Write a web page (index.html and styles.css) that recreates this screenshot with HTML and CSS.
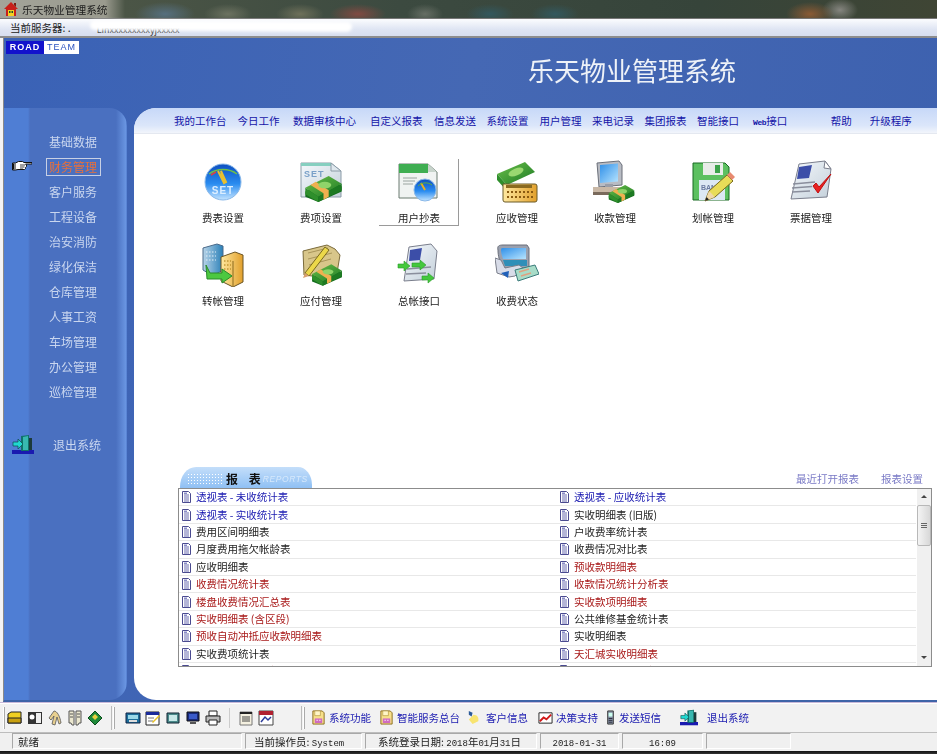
FILE: index.html
```html
<!DOCTYPE html>
<html lang="zh-CN">
<head>
<meta charset="utf-8">
<title>乐天物业管理系统</title>
<link rel="stylesheet" href="styles.css">
</head>
<body>
<svg class="defs" width="0" height="0" aria-hidden="true">
  <defs>
    <linearGradient id="gBall" x1="0" y1="0" x2="0" y2="1"><stop offset="0" stop-color="#0d4fc0"/><stop offset=".55" stop-color="#2a8cf0"/><stop offset="1" stop-color="#c4e4ff"/></linearGradient>
    <linearGradient id="gMoney" x1="0" y1="0" x2="1" y2="1"><stop offset="0" stop-color="#6cc04a"/><stop offset="1" stop-color="#1c7a24"/></linearGradient>
    <linearGradient id="gPaper" x1="0" y1="0" x2="1" y2="1"><stop offset="0" stop-color="#f4f8fc"/><stop offset="1" stop-color="#c4d0da"/></linearGradient>
    <linearGradient id="gGold" x1="0" y1="0" x2="1" y2="0"><stop offset="0" stop-color="#ffe9a0"/><stop offset="1" stop-color="#e2a02c"/></linearGradient>
    <linearGradient id="gScreen" x1="0" y1="0" x2="1" y2="1"><stop offset="0" stop-color="#2f8fe8"/><stop offset="1" stop-color="#b6e4ff"/></linearGradient>
    <linearGradient id="gTower" x1="0" y1="0" x2="1" y2="0"><stop offset="0" stop-color="#b8d4e8"/><stop offset="1" stop-color="#2a80b8"/></linearGradient>
    <symbol id="money" viewBox="0 0 30 22">
      <path d="M1 13 19 3l10 6v4L11 21 1 17z" fill="#156e1e"/>
      <path d="M1 10 19 1l10 6-18 10z" fill="url(#gMoney)"/>
      <path d="M1 10l10 7v4L1 15z" fill="#2f8f2c"/>
      <path d="M11 17 29 7v5L11 21z" fill="#1d7a22"/>
      <path d="M9 5.500l10 6.500v5l-4 2.200v-5L5 8z" fill="#f0b050"/>
      <ellipse cx="16" cy="8" rx="5" ry="2.500" fill="#8fd46a"/>
    </symbol>
    <symbol id="doc" viewBox="0 0 11 12">
      <path d="M1.500.500h6l2 2v9h-8z" fill="#fff" stroke="#4a4a90"/>
      <path d="M3 4h5M3 6h5M3 8h5M3 10h5" stroke="#6a6cb0" stroke-width="1"/>
      <path d="M3 1.500h3v1.500H3z" fill="#8a8cc8"/>
    </symbol>
    <symbol id="bolt" viewBox="0 0 16 16">
      <path d="M2 1h10l2 2v12H2z" fill="#f7e08a" stroke="#8a6a1a"/>
      <path d="M4 1h6v5H4z" fill="#fff6c8" stroke="#a88a2a" stroke-width=".6"/>
      <path d="M4 9h8v5H4z" fill="#d06cc0"/>
      <path d="M6 11h1M9 11h1" stroke="#fff" stroke-width="1.400"/>
    </symbol>
    <symbol id="exit" viewBox="0 0 22 19">
      <path d="M0 15h22v4H0z" fill="#1a1ab0"/>
      <path d="M9 1l8-1v16H9z" fill="#10726a"/>
      <path d="M11 2l5-1v14h-5z" fill="#38b8b0"/>
      <path d="M17 3h3v12h-3z" fill="#1c3a3a"/>
      <path d="M1 7h5V4l5 5-5 5v-3H1z" fill="#20d8d0" stroke="#0b4a4a" stroke-width=".7"/>
    </symbol>
  </defs>
</svg>

<div class="app">
  <div class="titlebar">
    <svg class="title-ico" viewBox="0 0 14 14"><path d="M7 0 0 7h2v7h10V7h2z" fill="#c8201a"/><path d="M4 8h6v6H4z" fill="#f4d020"/><path d="M5 9h1.500v2H5zM7.500 9H9v2H7.500z" fill="#20502a"/><path d="M10 1h2v4l-2-2z" fill="#7a1a10"/></svg>
    <span>乐天物业管理系统</span>
  </div>
  <div class="serverbar">
    <span class="server-label">当前服务器: .</span>
    <span class="server-value">Linxxxxxxxxxyjxxxxx</span>
    <span class="server-mask"></span>
  </div>

  <div class="stage">
    <header class="banner">
      <div class="logo"><span class="logo-road">ROAD</span><span class="logo-team">TEAM</span></div>
      <h1 class="brand">乐天物业管理系统</h1>
    </header>
    <div class="workspace">
      <aside class="sidebar">
        <ul class="side-list">
          <li class="side-item"><span class="side-text">基础数据</span></li>
          <li class="side-item">
            <svg class="hand" viewBox="0 0 20 11"><path d="M.500 2h3l3-1.500h4l1.500 1h8v1.500h-6.500l1 1v1.500l-1 1v1l-1 1H6L3.500 9H.500z" fill="#fff" stroke="#111"/><path d="M1.500 2.500v6M3 2.500v6" stroke="#111"/><path d="M8 4h5M8 6h4.500M8 8h3" stroke="#111" stroke-width=".8"/></svg>
            <span class="side-text side-active">财务管理</span>
          </li>
          <li class="side-item"><span class="side-text">客户服务</span></li>
          <li class="side-item"><span class="side-text">工程设备</span></li>
          <li class="side-item"><span class="side-text">治安消防</span></li>
          <li class="side-item"><span class="side-text">绿化保洁</span></li>
          <li class="side-item"><span class="side-text">仓库管理</span></li>
          <li class="side-item"><span class="side-text">人事工资</span></li>
          <li class="side-item"><span class="side-text">车场管理</span></li>
          <li class="side-item"><span class="side-text">办公管理</span></li>
          <li class="side-item"><span class="side-text">巡检管理</span></li>
        </ul>
        <div class="side-exit">
          <svg class="side-exit-ico"><use href="#exit"/></svg>
          <span class="side-text">退出系统</span>
        </div>
      </aside>

      <main class="panel">
        <nav class="topnav">
          <a>我的工作台</a><a>今日工作</a><a>数据审核中心</a><a>自定义报表</a><a>信息发送</a><a>系统设置</a><a>用户管理</a><a>来电记录</a><a>集团报表</a><a>智能接口</a><a class="web"><tt>Web</tt>接口</a>
          <a class="nav-help">帮助</a><a class="nav-up">升级程序</a>
        </nav>

        <section class="tiles">
          <div class="tile">
            <svg class="tile-ico" viewBox="0 0 44 44"><circle cx="22" cy="22" r="18" fill="url(#gBall)" stroke="#8ab8e8"/><path d="M8 14c8-6 20-6 28 0" fill="none" stroke="#6fc048" stroke-width="1.500"/><path d="M17 11l6 12M23 23l2-1-5-11z" stroke="#e8c030" stroke-width="2"/><path d="M10 15l5-3" stroke="#e04040" stroke-width="1.500"/><text x="22" y="34" class="svg-set">SET</text></svg>
            <span class="tile-label">费表设置</span>
          </div>
          <div class="tile">
            <svg class="tile-ico" viewBox="0 0 44 44"><path d="M2 3h30l10 8v26H2z" fill="url(#gPaper)" stroke="#8c9ca8"/><path d="M2 3h30v3H2z" fill="#86cfc0"/><path d="M32 3l10 8H32z" fill="#dfe8ee" stroke="#8c9ca8"/><text x="5" y="17" class="svg-set2">SET</text><use href="#money" x="5" y="14" width="39" height="30"/></svg>
            <span class="tile-label">费项设置</span>
          </div>
          <div class="tile tile-selected">
            <svg class="tile-ico" viewBox="0 0 44 44"><path d="M2 4h29l9 8v26H2z" fill="#f0f3f2" stroke="#6a7a70"/><path d="M2 4h29v9H2z" fill="#3fae52"/><path d="M31 4l9 8h-9z" fill="#c8d4cc"/><path d="M6 18h14M6 21h12M6 24h10" stroke="#9aa4a0"/><circle cx="28" cy="30" r="11" fill="url(#gBall)" stroke="#8ab8e8"/><path d="M24 23l4 7" stroke="#e8b020" stroke-width="2"/><path d="M21 26c4-4 10-4 14-1" fill="none" stroke="#60b040"/></svg>
            <span class="tile-label">用户抄表</span>
          </div>
          <div class="tile">
            <svg class="tile-ico" viewBox="0 0 44 44"><path d="M2 14 30 2l10 10-28 13z" fill="url(#gMoney)"/><path d="M2 14l10 11 0 6L2 20z" fill="#2f8f2c"/><ellipse cx="21" cy="12" rx="8" ry="3.500" fill="#9ad870" transform="rotate(-22 21 12)"/><path d="M8 24h32a2 2 0 0 1 2 2v14a2 2 0 0 1-2 2H10a2 2 0 0 1-2-2z" fill="url(#gGold)" stroke="#6a5a28"/><path d="M11 25h26v3H11z" fill="#8a6a20"/><path d="M12 32h26M12 37h26" stroke="#8a5a10" stroke-width="2" stroke-dasharray="2 2"/></svg>
            <span class="tile-label">应收管理</span>
          </div>
          <div class="tile">
            <svg class="tile-ico" viewBox="0 0 44 44"><path d="M4 3l22-2 3 4v20l-23 2z" fill="#b8bcc4" stroke="#6a6e78"/><path d="M7 5l18-1.500v18L7 23z" fill="url(#gScreen)"/><path d="M0 27h30v7H0z" fill="#c9b8a6"/><path d="M0 32h30v3H0z" fill="#7a6a5c"/><path d="M12 27h8v-3h-8z" fill="#9a9ea8"/><use href="#money" x="13" y="24" width="31" height="20"/></svg>
            <span class="tile-label">收款管理</span>
          </div>
          <div class="tile">
            <svg class="tile-ico" viewBox="0 0 44 44"><path d="M2 3h32l4 4v33H2z" fill="#5cc060" stroke="#186a22"/><path d="M12 3h20v12H12z" fill="#e8ece8"/><path d="M24 5h5v8h-5z" fill="#3ca24a"/><path d="M8 20h26v20H8z" fill="#dce8f4"/><text x="10" y="30" class="svg-bank">BAN</text><path d="M14 41l4-10 18-16 6 6-18 16z" fill="#e8dc58" stroke="#7a6a1c"/><path d="M36 15l3-3 5 5-3 3z" fill="#e88a70"/><path d="M14 41l4-10 6 6z" fill="#f0d8a8"/><path d="M14 41l1.500-4 2.500 2.500z" fill="#222"/></svg>
            <span class="tile-label">划帐管理</span>
          </div>
          <div class="tile">
            <svg class="tile-ico" viewBox="0 0 44 44"><path d="M10 4 36 1l6 8-4 28-36 2z" fill="url(#gPaper)" stroke="#7a7e8c"/><path d="M10 7l13-2-3 13-12 1z" fill="#3c4ea8"/><path d="M4 24l22-2M3 28l20-1.500M3 32l18-1" stroke="#8a8e9c" stroke-width="1.300"/><path d="M36 1l6 8-7-1z" fill="#fff" stroke="#7a7e8c"/><path d="M24 26l5 7L42 14l-12 13-3-4z" fill="#e82020" stroke="#c01010"/></svg>
            <span class="tile-label">票据管理</span>
          </div>
          <div class="tile">
            <svg class="tile-ico" viewBox="0 0 44 44"><path d="M2 5l14-4 6 2v24l-10 6-10-6z" fill="url(#gTower)" stroke="#4a6a8a"/><path d="M5 9h10M5 13h10M5 17h10" stroke="#e4f0f8" stroke-dasharray="1.500 1.500"/><path d="M20 14l14-5 8 3v27l-10 5-12-6z" fill="url(#gGold)" stroke="#6a5424"/><path d="M32 18v25" stroke="#8a6a20"/><path d="M23 18h7M23 22h7M23 26h7" stroke="#a87a10" stroke-dasharray="1.500 1.500"/><path d="M5 22l4 8h12v-4l10 7-10 7v-4H6z" fill="#4cc840" stroke="#2a8a2a"/></svg>
            <span class="tile-label">转帐管理</span>
          </div>
          <div class="tile">
            <svg class="tile-ico" viewBox="0 0 44 44"><path d="M4 8 28 2l8 4 5 6-4 24-32-4z" fill="#d8c68a" stroke="#7a6a3a"/><path d="M9 10l20-5M9 16l24-6M10 22l22-6" stroke="#a8955a"/><path d="M6 30 26 4l4 3L10 33z" fill="#ecd84a" stroke="#7a6a1c"/><path d="M6 30l4 3-6 2z" fill="#d8a070"/><use href="#money" x="12" y="20" width="32" height="24"/></svg>
            <span class="tile-label">应付管理</span>
          </div>
          <div class="tile">
            <svg class="tile-ico" viewBox="0 0 44 44"><path d="M12 4l22-3 6 7-3 28-30 2z" fill="url(#gPaper)" stroke="#7a7e8c"/><path d="M13 7l12-2-2 12-11 1z" fill="#3c4ea8"/><path d="M10 26l24-2M9 31l20-1" stroke="#8a8e9c" stroke-width="1.300"/><path d="M1 21h6v-3l6 5-6 5v-3H1zM15 20h8v-3l6 5-6 5v-3h-8zM25 33h6v-3l6 5-6 5v-3h-6z" fill="#44c83c" stroke="#2a9a2a" stroke-width=".6"/></svg>
            <span class="tile-label">总帐接口</span>
          </div>
          <div class="tile">
            <svg class="tile-ico" viewBox="0 0 44 44"><path d="M3 7C2 3 4 2 8 2h24l2 3v20H10C4 20 3 12 3 7z" fill="#9aa0ae" stroke="#6a6e7a"/><path d="M6 7c0-2 1-2 3-2h22v11H8c-1-3-2-6-2-9z" fill="url(#gScreen)"/><path d="M8 17h24v6H10z" fill="#2f8fb8"/><path d="M0 15l6 2 4 8 14-3 4 3-8 8-6 1-12-4z" fill="#d8dce8" stroke="#7a7e8a"/><path d="M6 30l8-2-1 7z" fill="#2060b8"/><path d="M20 27l20-5 4 9-21 7z" fill="#a8dcc8" stroke="#3a7a7a"/><path d="M24 29l10-3M26 33l10-3" stroke="#e0a080" stroke-width="1.500"/></svg>
            <span class="tile-label">收费状态</span>
          </div>
        </section>

        <section class="reports">
          <div class="reports-head">
            <div class="reports-tab"><span class="tab-dots"></span><b>报 表</b><i>REPORTS</i></div>
            <div class="reports-links"><a>最近打开报表</a><a>报表设置</a></div>
          </div>
          <div class="reports-box">
            <div class="reports-list">
              <div class="r-row"><span class="r-cell blue"><svg class="d"><use href="#doc"/></svg>透视表 - 未收统计表</span><span class="r-cell blue"><svg class="d"><use href="#doc"/></svg>透视表 - 应收统计表</span></div>
              <div class="r-row"><span class="r-cell blue"><svg class="d"><use href="#doc"/></svg>透视表 - 实收统计表</span><span class="r-cell"><svg class="d"><use href="#doc"/></svg>实收明细表 (旧版)</span></div>
              <div class="r-row"><span class="r-cell"><svg class="d"><use href="#doc"/></svg>费用区间明细表</span><span class="r-cell"><svg class="d"><use href="#doc"/></svg>户收费率统计表</span></div>
              <div class="r-row"><span class="r-cell"><svg class="d"><use href="#doc"/></svg>月度费用拖欠帐龄表</span><span class="r-cell"><svg class="d"><use href="#doc"/></svg>收费情况对比表</span></div>
              <div class="r-row"><span class="r-cell"><svg class="d"><use href="#doc"/></svg>应收明细表</span><span class="r-cell red"><svg class="d"><use href="#doc"/></svg>预收款明细表</span></div>
              <div class="r-row"><span class="r-cell red"><svg class="d"><use href="#doc"/></svg>收费情况统计表</span><span class="r-cell red"><svg class="d"><use href="#doc"/></svg>收款情况统计分析表</span></div>
              <div class="r-row"><span class="r-cell red"><svg class="d"><use href="#doc"/></svg>楼盘收费情况汇总表</span><span class="r-cell red"><svg class="d"><use href="#doc"/></svg>实收款项明细表</span></div>
              <div class="r-row"><span class="r-cell red"><svg class="d"><use href="#doc"/></svg>实收明细表 (含区段)</span><span class="r-cell"><svg class="d"><use href="#doc"/></svg>公共维修基金统计表</span></div>
              <div class="r-row"><span class="r-cell red"><svg class="d"><use href="#doc"/></svg>预收自动冲抵应收款明细表</span><span class="r-cell"><svg class="d"><use href="#doc"/></svg>实收明细表</span></div>
              <div class="r-row"><span class="r-cell"><svg class="d"><use href="#doc"/></svg>实收费项统计表</span><span class="r-cell red"><svg class="d"><use href="#doc"/></svg>天汇城实收明细表</span></div>
              <div class="r-row"><span class="r-cell red"><svg class="d"><use href="#doc"/></svg>未收款项按期明细表</span><span class="r-cell red"><svg class="d"><use href="#doc"/></svg>实收款项按期明细表</span></div>
            </div>
            <div class="scrollbar">
              <span class="sb-arrow sb-up"></span>
              <span class="sb-thumb"><span class="sb-grip"></span></span>
              <span class="sb-track"></span>
              <span class="sb-arrow sb-down"></span>
            </div>
          </div>
        </section>
      </main>
    </div>
  </div>

  <div class="toolbar">
    <span class="grip"></span>
    <span class="tool-group">
      <svg class="ti" viewBox="0 0 16 16"><path d="M1 4l3-2h10v11H1z" fill="#f0d020" stroke="#222"/><path d="M1 8h13v5H1z" fill="#c8a010" stroke="#222"/></svg>
      <svg class="ti" viewBox="0 0 16 16"><path d="M1 2h14v12H1z" fill="#333"/><path d="M9 3h5v10H9z" fill="#eee"/><circle cx="5" cy="7" r="2.500" fill="#fff"/></svg>
      <svg class="ti" viewBox="0 0 16 16"><path d="M7 1c3 0 6 5 7 12l-2 1-2-7-2 8-3-1 2-8-3 4-2-2z" fill="#e8d090" stroke="#555" stroke-width=".8"/></svg>
      <svg class="ti" viewBox="0 0 16 16"><path d="M2 1h5v14H5l-1-2H2zM9 1h5v12h-2l-1 2H9z" fill="#ece8d0" stroke="#555"/><path d="M3 4h3M3 7h3M10 4h3M10 7h3" stroke="#555"/></svg>
      <svg class="ti" viewBox="0 0 16 16"><path d="M8 1l7 7-7 7-7-7z" fill="#1f8a3a" stroke="#0a4a1a"/><path d="M8 4l3 3-3 3-3-3z" fill="#e8d040"/></svg>
    </span>
    <span class="sep"></span><span class="grip"></span>
    <span class="tool-group group-b">
      <svg class="ti" viewBox="0 0 16 16"><path d="M1 3h14v10H1z" fill="#1c6e9a" stroke="#124"/><path d="M3 5h10v4H3z" fill="#9ad8e8"/><path d="M4 10h8v2H4z" fill="#ddd"/></svg>
      <svg class="ti" viewBox="0 0 16 16"><path d="M1 2h13v13H1z" fill="#fff" stroke="#222"/><path d="M1 2h13v3H1z" fill="#1a2a9a"/><path d="M3 8h6M3 11h5" stroke="#777"/><path d="M7 12l7-7 1 1-7 7z" fill="#e8c020"/></svg>
      <svg class="ti" viewBox="0 0 16 16"><path d="M2 3h12v10H2z" fill="#4a8a8a" stroke="#123"/><path d="M4 5h8v6H4z" fill="#c8e8e8"/></svg>
      <svg class="ti" viewBox="0 0 16 16"><path d="M2 2h12v9H2z" fill="#1a2a7a" stroke="#111"/><path d="M4 4h8v5H4z" fill="#3a5ac8"/><path d="M5 12h6v2H5z" fill="#555"/></svg>
      <svg class="ti" viewBox="0 0 16 16"><path d="M4 1h8v5H4z" fill="#fff" stroke="#222"/><path d="M1 6h14v6H1z" fill="#bbb" stroke="#222"/><path d="M4 10h8v5H4z" fill="#fff" stroke="#222"/></svg>
      <span class="thin-sep"></span>
      <svg class="ti" viewBox="0 0 16 16"><path d="M2 2h12v13H2z" fill="#f4f0e0" stroke="#777"/><path d="M2 2h12v2H2z" fill="#222"/><path d="M4 7h8M4 9h8M4 11h8" stroke="#444"/></svg>
      <svg class="ti" viewBox="0 0 16 16"><path d="M1 1h14v14H1z" fill="#fff" stroke="#444"/><path d="M1 1h14v4H1z" fill="#b02030"/><path d="M3 12l4-5 3 3 3-3" fill="none" stroke="#2a3a9a" stroke-width="1.500"/></svg>
    </span>
    <span class="sep wide"></span><span class="grip"></span>
    <span class="tool-links">
      <a class="t1"><svg class="ti"><use href="#bolt"/></svg>系统功能</a>
      <a class="t2"><svg class="ti"><use href="#bolt"/></svg>智能服务总台</a>
      <a class="t3"><svg class="ti" viewBox="0 0 16 16"><path d="M8 5c4 0 6 3 5 7l-6 3-4-5z" fill="#f8e470"/><path d="M3 1l4 2-1 4-3-2z" fill="#2a5a9a"/></svg>客户信息</a>
      <a class="t4"><svg class="ti" viewBox="0 0 16 16"><path d="M1 3h14v11H1z" fill="#fff" stroke="#222"/><path d="M2 12l4-4 3 2 5-5" fill="none" stroke="#d01818" stroke-width="2"/></svg>决策支持</a>
      <a class="t5"><svg class="ti" viewBox="0 0 16 16"><path d="M5 1h6v14H5z" fill="#8a96a8" stroke="#333"/><path d="M6 3h4v4H6z" fill="#cfe"/><path d="M6 9h4M6 11h4M6 13h4" stroke="#223"/></svg>发送短信</a>
      <a class="t6"><svg class="ti-exit"><use href="#exit"/></svg>退出系统</a>
    </span>
  </div>

  <footer class="statusbar">
    <span class="st st-ready">就绪</span>
    <span class="st st-op">当前操作员: <tt>System</tt></span>
    <span class="st st-login">系统登录日期: <tt>2018</tt>年<tt>01</tt>月<tt>31</tt>日</span>
    <span class="st st-date"><tt>2018-01-31</tt></span>
    <span class="st st-time"><tt>16:09</tt></span>
    <span class="st st-empty"></span>
  </footer>
  <div class="baseline"></div>
</div>
</body>
</html>
```

FILE: styles.css
```css
* { box-sizing: border-box; }
html, body { margin: 0; padding: 0; height: 100%; overflow: hidden; background: #f4f4f4; }
body { font-family: "Noto Sans CJK SC", "Liberation Sans", sans-serif; font-size: 10.5px; color: #222; }
a { text-decoration: none; color: inherit; }
.defs { position: absolute; }
.app { width: 937px; height: 754px; display: flex; flex-direction: column; filter: blur(.3px); }

/* title + server */
.titlebar { height: 19px; display: flex; align-items: center; gap: 4px; padding-left: 4px; font-size: 10.700px; color: #1c1c1c;
  background:
    radial-gradient(30px 12px at 165px 14px, #566f7e, transparent),
    radial-gradient(24px 10px at 228px 14px, #6c7260, transparent),
    radial-gradient(24px 10px at 300px 14px, #6e705a, transparent),
    radial-gradient(28px 10px at 358px 14px, #804a42, transparent),
    radial-gradient(18px 10px at 425px 14px, #666e64, transparent),
    radial-gradient(24px 10px at 490px 14px, #33585e, transparent),
    radial-gradient(24px 10px at 555px 14px, #33585e, transparent),
    radial-gradient(24px 12px at 810px 14px, #8a5a34, transparent),
    radial-gradient(18px 12px at 840px 10px, #85857f, transparent),
    linear-gradient(90deg, #a3a49a 0, #9a9a8e 105px, #4b5546 125px, #3c4a40 400px, #36443a 700px, #3f4534 937px);
  border-bottom: 1px solid #777; }
.title-ico { width: 14px; height: 14px; }
.serverbar { position: relative; height: 19px; display: flex; align-items: center; padding-left: 10px; font-size: 10.500px;
  background: linear-gradient(#fbfcfe, #dfe5f3 60%, #d7deef); border-bottom: 2px solid #8d8d8d; }
.server-value { margin-left: 26px; font-size: 9px; color: #444; padding-top: 3px; }
.server-mask { position: absolute; left: 90px; top: 2px; width: 262px; height: 10px; background: #fff; border-radius: 6px; filter: blur(1.500px); transform: rotate(.4deg); }

/* stage */
.stage { height: 664px; flex: none; display: flex; flex-direction: column; border-left: 1px solid #8a8a8a; margin-left: 3px;
  background: linear-gradient(100deg, #3a62b6, #4568b4 45%, #3c60ae 100%); border-bottom: 2px solid #3f64a8; }
.banner { height: 70px; flex: none; display: flex; justify-content: flex-end; align-items: flex-start; position: relative; }
.logo { position: absolute; left: 2px; top: 3px; display: flex; height: 13px; font: bold 9px/13px "Liberation Sans", sans-serif; letter-spacing: 1px; }
.logo-road { width: 38px; background: #1212cc; color: #fff; text-align: center; }
.logo-team { width: 35px; background: #fff; color: #2a52c0; font-weight: normal; text-align: center; }
.brand { margin: 17px 201px 0 0; font-size: 26px; line-height: 30px; font-weight: 400; color: #eef2f8; }

.workspace { flex: 1; display: flex; gap: 7px; min-height: 0; }
.sidebar { width: 123px; flex: none; display: flex; flex-direction: column; border-radius: 0 18px 18px 0; color: #c9d6ef; font-size: 12px;
  background: linear-gradient(90deg, #4f7ed4 0, #4f7ed4 24px, #4a70c0 26px, #4a70c0 112px, #6a96e2 122px, #4a74c8 123px); }
.side-list { list-style: none; margin: 21px 0 0; padding: 0; }
.side-item { position: relative; height: 25px; padding-left: 43px; display: flex; align-items: center; }
.side-text { display: inline-block; padding: 0 2px; line-height: 16px; }
.side-active { color: #e8703a; border: 1px solid #c8d0e4; margin-left: -1px; padding-right: 3px; height: 18px; }
.hand { position: absolute; left: 8px; top: 7px; width: 20px; height: 11px; }
.side-exit { display: flex; align-items: center; gap: 17px; margin: 31px 0 0 8px; }
.side-exit-ico { width: 22px; height: 19px; }

/* panel */
.panel { flex: 1; min-width: 0; display: flex; flex-direction: column; background: #fff; border-radius: 22px 0 0 22px; overflow: hidden; }
.topnav { height: 26px; flex: none; display: flex; align-items: center; padding-left: 40px; gap: 10.500px; color: #1414a8; font-size: 10.500px;
  background: linear-gradient(#c7d8f8, #dbe6fa 70%, #f2f5fb); border-bottom: 1px solid #e4e8f0; }
.topnav a:nth-child(2) { margin-left: .500px; }
.topnav a:nth-child(3) { margin-left: 3px; }
.topnav a:nth-child(4) { margin-left: 3.500px; }
.topnav a:nth-child(5) { margin-left: 1px; }
.topnav a:nth-child(7) { margin-left: .500px; }
.topnav .web { margin-left: 3.500px; }
.web tt { font: bold 8px "Liberation Mono", monospace; letter-spacing: -.400px; }
.topnav .nav-help { margin-left: 33px; }
.topnav .nav-up { margin-left: 7.500px; }

.tiles { display: grid; grid-template-columns: repeat(7, 98px); grid-auto-rows: 83px; padding: 25px 0 0 40px; flex: 1; align-content: start; }
.tile { width: 80px; height: 67px; margin: 0 9px; display: flex; flex-direction: column; align-items: center; padding-top: 1px; }
.tile-ico { width: 44px; height: 44px; margin-bottom: 7px; flex: none; }
.tile-label { line-height: 14px; }
.tile-selected { border-right: 1px solid #9a9a9a; border-bottom: 1px solid #9a9a9a; padding-left: 1px; }
.svg-set { font: bold 10px "Liberation Sans", sans-serif; fill: #dceeff; text-anchor: middle; letter-spacing: 1px; }
.svg-set2 { font: bold 9px "Liberation Sans", sans-serif; fill: #7aa0c8; letter-spacing: 1px; }
.svg-bank { font: bold 7px "Liberation Sans", sans-serif; fill: #6a7aa0; }

/* reports */
.reports { flex: none; padding: 0 5px 33px 44px; }
.reports-head { height: 21px; display: flex; justify-content: space-between; align-items: flex-end; padding-left: 2px; }
.reports-tab { width: 132px; height: 21px; flex: none; display: flex; align-items: center; padding: 2px 0 0 7px; gap: 4px; border-radius: 16px 14px 0 0 / 20px 18px 0 0; overflow: hidden;
  background: linear-gradient(#c4defa, #8fc0f4); }
.tab-dots { width: 35px; height: 11px; flex: none; background: radial-gradient(circle, #fff 0 .8px, transparent 1px) 0 0 / 3px 3px; }
.reports-tab b { font-size: 12px; color: #111; white-space: pre; letter-spacing: 4px; flex: none; }
.reports-tab i { font: italic 8.500px "Liberation Sans", sans-serif; color: #d6e8fb; letter-spacing: .600px; margin-left: -6px; flex: none; }
.reports-links { display: flex; gap: 22px; color: #7a7ac6; padding: 0 9px 2px 0; line-height: 14px; }
.reports-box { height: 179px; display: flex; border: 1px solid #8c8c8c; overflow: hidden; background: #fff; }
.reports-list { flex: 1; min-width: 0; overflow: hidden; }
.r-row { height: 17.400px; display: grid; grid-template-columns: 378px 1fr; align-items: center; border-bottom: 1px solid #e8e8e8; padding: 0 0 0 2px; margin-right: 1px; line-height: 16px; }
.r-cell { display: flex; align-items: center; gap: 4px; color: #1c1c1c; white-space: pre; }
.r-cell.blue { color: #1818b0; }
.r-cell.red { color: #a81818; }
.d { width: 11px; height: 12px; flex: none; }
.scrollbar { width: 14px; flex: none; display: flex; flex-direction: column; background: #f0f0f0; }
.sb-arrow { height: 16px; flex: none; position: relative; }
.sb-arrow::after { content: ""; position: absolute; left: 4px; top: 6px; border: 3px solid transparent; }
.sb-up::after { border-bottom-color: #444; border-top: 0; }
.sb-down::after { border-top-color: #444; border-bottom: 0; }
.sb-thumb { height: 41px; flex: none; background: linear-gradient(90deg, #f4f4f4, #d8d8d8); border: 1px solid #b8b8b8; border-radius: 2px; display: flex; align-items: center; justify-content: center; }
.sb-grip { width: 6px; height: 5px; border-top: 1px solid #666; border-bottom: 1px solid #666; background: linear-gradient(#666, #666) center / 100% 1px no-repeat; }
.sb-track { flex: 1; }

/* toolbar */
.toolbar { height: 31px; flex: none; display: flex; align-items: center; padding-left: 2px; background: #f2f2f2; border-top: 1px solid #c9b9d8; border-bottom: 1px solid #bdbdbd; box-shadow: inset 0 1px 0 #fff; }
.grip { width: 2px; height: 22px; border-left: 1px solid #fff; border-right: 1px solid #aaa; margin-left: 1px; flex: none; }
.sep { width: 1px; height: 24px; background: #bbb; margin-left: 8px; flex: none; }
.sep.wide { margin-left: 27px; }
.tool-group { display: flex; align-items: center; gap: 4px; padding-left: 2px; }
.tool-group .ti { width: 16px; height: 16px; }
.tool-group.group-b { padding-left: 10px; }
.thin-sep { width: 1px; height: 20px; background: #ccc; margin: 0 4px; }
.tool-links { flex: 1; display: flex; align-items: center; color: #1a1ab0; padding-left: 6px; }
.tool-links a { display: flex; align-items: center; gap: 3px; flex: none; }
.tool-links .ti { width: 15px; height: 15px; }
.ti-exit { width: 18px; height: 17px; margin-right: 6px; }
.tool-links .t2 { margin-left: 8px; }
.tool-links .t3 { margin-left: 6px; gap: 5px; }
.tool-links .t4 { margin-left: 10px; }
.tool-links .t5 { margin-left: 5px; gap: 1px; }
.tool-links .t6 { margin-left: 19px; }

/* status */
.statusbar { height: 18px; flex: none; display: flex; background: #f0f0f0; font-size: 10.500px; padding-left: 12px; }
.st { height: 16px; line-height: 15px; border: 1px solid; border-color: #a8a8a8 #fff #fff #a8a8a8; margin-right: 3px; white-space: nowrap; flex: none; }
.st tt { font: 9px "Liberation Mono", "DejaVu Sans Mono", monospace; }
.st-ready { width: 230px; padding-left: 5px; }
.st-op { width: 117px; padding-left: 8px; }
.st-login { width: 172px; padding-left: 12px; }
.st-date { width: 79px; text-align: center; }
.st-time { width: 81px; text-align: center; }
.st-empty { width: 85px; }
.baseline { height: 3px; background: linear-gradient(#111, #333); flex: none; }
```
